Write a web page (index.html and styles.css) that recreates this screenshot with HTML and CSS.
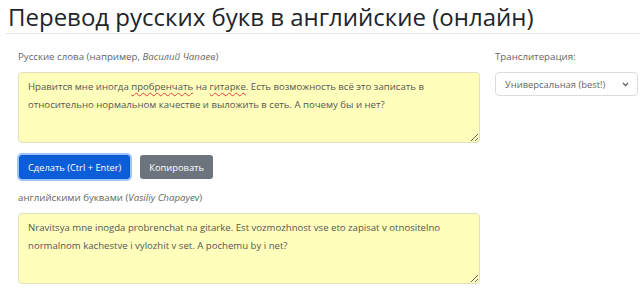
FILE: index.html
```html
<!DOCTYPE html>
<html lang="ru">
<head>
<meta charset="utf-8">
<title>Перевод русских букв в английские (онлайн)</title>
<link rel="stylesheet" href="styles.css">
</head>
<body>
<h1 class="title">Перевод русских букв в английские (онлайн)</h1>
<div class="rule"></div>
<div class="form">
  <div class="main">
    <label class="label">Русские слова (например, <i>Василий Чапаев</i>)</label>
    <div class="area">Нравится мне иногда <span class="spell">пробренчать</span> на <span class="spell">гитарке</span>. Есть возможность всё это записать в относительно нормальном качестве и выложить в сеть. А почему бы и нет?</div>
    <div class="buttons">
      <button class="btn btn-primary">Сделать (Ctrl + Enter)</button>
      <button class="btn btn-secondary">Копировать</button>
    </div>
    <label class="label">английскими буквами (<i>Vasiliy Chapayev</i>)</label>
    <div class="area">Nravitsya mne inogda probrenchat na gitarke. Est vozmozhnost vse eto zapisat v otnositelno normalnom kachestve i vylozhit v set. A pochemu by i net?</div>
  </div>
  <div class="side">
    <label class="label">Транслитерация:</label>
    <div class="select">
      <span>Универсальная (best!)</span>
      <svg class="chev" width="7" height="5" viewBox="0 0 7 5"><path d="M1 1 L3.5 3.6 L6 1" fill="none" stroke="#555" stroke-width="1.2"/></svg>
    </div>
  </div>
</div>
</body>
</html>
```
FILE: styles.css
```css
html, body {
  margin: 0;
  padding: 0;
  background: #fff;
  font-family: "Open Sans", "Noto Sans", sans-serif;
  color: #444;
}
.title {
  margin: 0;
  padding: 2px 0 0 8px;
  font-size: 24px;
  font-weight: 400;
  line-height: 29px;
  color: #212529;
}
.rule {
  margin: 2px 0 0 6px;
  height: 1px;
  background: #e3e3e3;
}
.form {
  display: flex;
  padding: 16px 0 0 18px;
  gap: 15px;
}
.main {
  width: 462px;
  display: flex;
  flex-direction: column;
}
.side {
  width: 143px;
  display: flex;
  flex-direction: column;
}
.label {
  font-size: 9.7px;
  line-height: 14px;
  color: #666;
  margin-bottom: 8px;
}
.area {
  box-sizing: border-box;
  height: 71px;
  background: #ffffbb;
  border: 1px solid #e0e0c0;
  border-radius: 4px;
  padding: 5px 9px;
  font-size: 9.6px;
  line-height: 18px;
  color: #555;
  resize: vertical;
  overflow: auto;
}
.spell {
  text-decoration: underline wavy #e04040;
  text-decoration-thickness: 1px;
  text-underline-offset: 2px;
}
.buttons {
  display: flex;
  gap: 10px;
  margin: 12px 0 12px 1px;
}
.btn {
  font-family: inherit;
  font-size: 9.3px;
  height: 24px;
  padding: 0 8px;
  border-radius: 3px;
  border: 1px solid transparent;
  color: #fff;
}
.btn-primary {
  background: #0b5ed7;
  border-color: #0a58ca;
  box-shadow: 0 0 0 2px #9ec5fe;
}
.btn-secondary {
  background: #6c757d;
}
.select {
  box-sizing: border-box;
  height: 24px;
  border: 1px solid #dcdcdc;
  border-radius: 4px;
  display: flex;
  align-items: center;
  justify-content: space-between;
  padding: 0 8px 0 9px;
  font-size: 9.4px;
  color: #666;
}
.chev {
  display: block;
}
```
